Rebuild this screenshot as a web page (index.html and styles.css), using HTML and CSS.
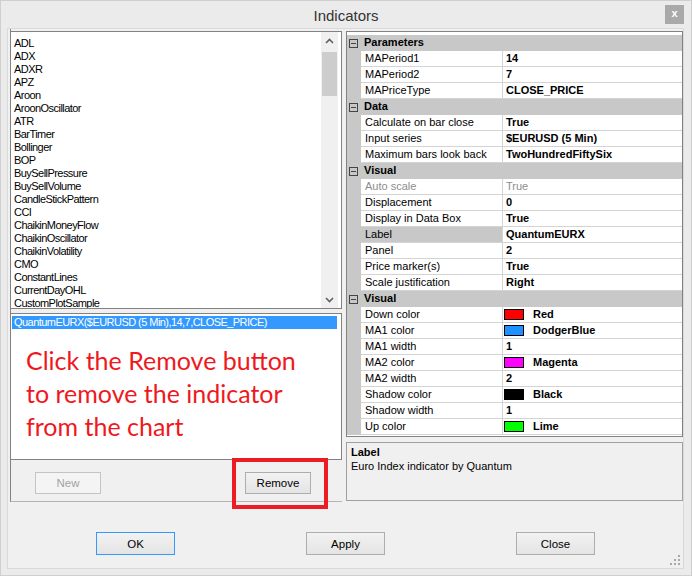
FILE: index.html
```html
<!DOCTYPE html>
<html lang="en">
<head>
    <meta charset="UTF-8">
    <title>Indicators</title>
    <link rel="stylesheet" href="styles.css">
</head>
<body>
<div class="window">
    <div class="titlebar">
        <span></span>
        <span class="title">Indicators</span>
        <span class="close">x</span>
    </div>
    <div class="client">
        <div class="panes">
            <!-- left side: available + applied indicators -->
            <div class="left">
                <div class="list available">
                    <ul class="items">
                        <li>ADL</li>
                        <li>ADX</li>
                        <li>ADXR</li>
                        <li>APZ</li>
                        <li>Aroon</li>
                        <li>AroonOscillator</li>
                        <li>ATR</li>
                        <li>BarTimer</li>
                        <li>Bollinger</li>
                        <li>BOP</li>
                        <li>BuySellPressure</li>
                        <li>BuySellVolume</li>
                        <li>CandleStickPattern</li>
                        <li>CCI</li>
                        <li>ChaikinMoneyFlow</li>
                        <li>ChaikinOscillator</li>
                        <li>ChaikinVolatility</li>
                        <li>CMO</li>
                        <li>ConstantLines</li>
                        <li>CurrentDayOHL</li>
                        <li>CustomPlotSample</li>
                    </ul>
                    <div class="scrollbar">
                        <div class="arrow">
                            <svg width="9" height="6" viewBox="0 0 9 6"><path d="M1 5 L4.5 1.5 L8 5" fill="none" stroke="#606060" stroke-width="1.6"/></svg>
                        </div>
                        <div class="thumb"></div>
                        <div class="track"></div>
                        <div class="arrow">
                            <svg width="9" height="6" viewBox="0 0 9 6"><path d="M1 1 L4.5 4.5 L8 1" fill="none" stroke="#606060" stroke-width="1.6"/></svg>
                        </div>
                    </div>
                </div>
                <div class="list applied">
                    <div class="selected">QuantumEURX($EURUSD (5 Min),14,7,CLOSE_PRICE)</div>
                    <div class="note">Click the Remove button<br>to remove the indicator<br>from the chart</div>
                </div>
                <div class="left-buttons">
                    <button class="btn small disabled">New</button>
                    <div class="marked">
                        <button class="btn small">Remove</button>
                        <div class="redbox"></div>
                    </div>
                </div>
            </div>

            <!-- right side: property grid -->
            <div class="right">
                <div class="grid">
                    <div class="row cat"><span class="margin"><i class="minus"></i></span><span class="catname">Parameters</span></div>
                    <div class="row"><span class="margin"></span><span class="name">MAPeriod1</span><span class="val">14</span></div>
                    <div class="row"><span class="margin"></span><span class="name">MAPeriod2</span><span class="val">7</span></div>
                    <div class="row"><span class="margin"></span><span class="name">MAPriceType</span><span class="val">CLOSE_PRICE</span></div>
                    <div class="row cat"><span class="margin"><i class="minus"></i></span><span class="catname">Data</span></div>
                    <div class="row"><span class="margin"></span><span class="name">Calculate on bar close</span><span class="val">True</span></div>
                    <div class="row"><span class="margin"></span><span class="name">Input series</span><span class="val">$EURUSD (5 Min)</span></div>
                    <div class="row"><span class="margin"></span><span class="name">Maximum bars look back</span><span class="val">TwoHundredFiftySix</span></div>
                    <div class="row cat"><span class="margin"><i class="minus"></i></span><span class="catname">Visual</span></div>
                    <div class="row readonly"><span class="margin"></span><span class="name">Auto scale</span><span class="val">True</span></div>
                    <div class="row"><span class="margin"></span><span class="name">Displacement</span><span class="val">0</span></div>
                    <div class="row"><span class="margin"></span><span class="name">Display in Data Box</span><span class="val">True</span></div>
                    <div class="row current"><span class="margin"></span><span class="name">Label</span><span class="val">QuantumEURX</span></div>
                    <div class="row"><span class="margin"></span><span class="name">Panel</span><span class="val">2</span></div>
                    <div class="row"><span class="margin"></span><span class="name">Price marker(s)</span><span class="val">True</span></div>
                    <div class="row"><span class="margin"></span><span class="name">Scale justification</span><span class="val">Right</span></div>
                    <div class="row cat"><span class="margin"><i class="minus"></i></span><span class="catname">Visual</span></div>
                    <div class="row"><span class="margin"></span><span class="name">Down color</span><span class="val"><i class="swatch red"></i>Red</span></div>
                    <div class="row"><span class="margin"></span><span class="name">MA1 color</span><span class="val"><i class="swatch blue"></i>DodgerBlue</span></div>
                    <div class="row"><span class="margin"></span><span class="name">MA1 width</span><span class="val">1</span></div>
                    <div class="row"><span class="margin"></span><span class="name">MA2 color</span><span class="val"><i class="swatch magenta"></i>Magenta</span></div>
                    <div class="row"><span class="margin"></span><span class="name">MA2 width</span><span class="val">2</span></div>
                    <div class="row"><span class="margin"></span><span class="name">Shadow color</span><span class="val"><i class="swatch black"></i>Black</span></div>
                    <div class="row"><span class="margin"></span><span class="name">Shadow width</span><span class="val">1</span></div>
                    <div class="row"><span class="margin"></span><span class="name">Up color</span><span class="val"><i class="swatch lime"></i>Lime</span></div>
                </div>
                <div class="help">
                    <div class="help-title">Label</div>
                    <div class="help-text">Euro Index indicator by Quantum</div>
                </div>
            </div>
        </div>

        <div class="footer">
            <button class="btn wide default">OK</button>
            <button class="btn wide">Apply</button>
            <button class="btn wide">Close</button>
            <svg class="grip" width="10" height="10" viewBox="0 0 10 10">
                <rect x="8" y="0" width="2" height="2" fill="#a8a8a8"/>
                <rect x="4" y="4" width="2" height="2" fill="#a8a8a8"/>
                <rect x="8" y="4" width="2" height="2" fill="#a8a8a8"/>
                <rect x="0" y="8" width="2" height="2" fill="#a8a8a8"/>
                <rect x="4" y="8" width="2" height="2" fill="#a8a8a8"/>
                <rect x="8" y="8" width="2" height="2" fill="#a8a8a8"/>
            </svg>
        </div>
    </div>
</div>
</body>
</html>
```

FILE: styles.css
```css
*{
    box-sizing: border-box;
}
body{
    margin: 0;
    background: #ebebeb;
    font-family: "Liberation Sans", Arial, sans-serif;
    font-size: 11px;
    color: #000;
}
.window{
    width: 692px;
    height: 576px;
    border: 1px solid #cfcfcf;
    background: #ebebeb;
}
.titlebar{
    height: 27px;
    display: grid;
    grid-template-columns: 1fr auto 1fr;
    align-items: center;
}
.title{
    font-size: 15px;
    color: #333;
    padding-top: 1px;
}
.close{
    justify-self: end;
    width: 19px;
    height: 19px;
    margin-right: 7px;
    background: #a9a9a9;
    color: #fff;
    font-size: 11px;
    font-weight: bold;
    line-height: 17px;
    text-align: center;
}
.client{
    margin-left: 6px;
    width: 677px;
    height: 541px;
    border: 1px solid #d9d9d9;
    background: #f0f0f0;
}
.panes{
    display: flex;
    height: 473px;
}

/* left pane */
.left{
    margin-left: 2px;
    width: 332px;
    padding-top: 2px;
    border-left: 1px solid #828282;
    border-bottom: 1px solid #b4b4b4;
}
.list{
    background: #fff;
    border: 1px solid #828282;
    border-left: 0;
    letter-spacing: -0.55px;
}
.available{
    height: 278px;
    display: flex;
}
.items{
    list-style: none;
    margin: 0;
    padding: 5px 0 0 3px;
    flex: 1;
    line-height: 13px;
    overflow: hidden;
}
.scrollbar{
    width: 17px;
    margin-right: 3px;
    background: #f0f0f0;
    display: flex;
    flex-direction: column;
}
.scrollbar .arrow{
    height: 17px;
    display: flex;
    align-items: center;
    justify-content: center;
}
.scrollbar .thumb{
    height: 44px;
    margin: 3px 1px 0;
    background: #cdcdcd;
}
.scrollbar .track{
    flex: 1;
}
.applied{
    height: 147px;
    margin-top: 4px;
    padding-top: 2px;
}
.selected{
    margin: 0 4px 0 1px;
    height: 13px;
    line-height: 13px;
    padding-left: 2px;
    background: #3399ff;
    color: #fff;
}
.note{
    margin-top: 15px;
    padding-left: 15px;
    font-family: Lato, "Open Sans", sans-serif;
    font-size: 25px;
    line-height: 33px;
    letter-spacing: 0;
    color: #f01820;
}
.left-buttons{
    display: flex;
    padding: 12px 0 0 24px;
    gap: 144px;
}
.marked{
    position: relative;
}
.redbox{
    position: absolute;
    left: -13px;
    top: -14px;
    width: 96px;
    height: 51px;
    border: 4px solid #ed1c24;
}

/* buttons */
.btn{
    font-family: "Liberation Sans", Arial, sans-serif;
    font-size: 11.5px;
    color: #000;
    border: 1px solid #adadad;
    background: linear-gradient(#f2f2f2, #e4e4e4);
    padding: 0;
}
.btn.small{
    width: 66px;
    height: 22px;
}
.btn.wide{
    width: 79px;
    height: 23px;
}
.btn.disabled{
    color: #a3a3a3;
    border-color: #c4c4c4;
    background: #f4f4f4;
}
.btn.default{
    border-color: #3399ff;
}

/* property grid */
.right{
    margin-left: 4px;
    width: 337px;
    padding-top: 2px;
}
.grid{
    height: 406px;
    border: 1px solid #828282;
    padding-top: 3px;
    background: #fff;
}
.row{
    display: grid;
    grid-template-columns: 14px 142px 1fr;
    height: 16px;
    line-height: 15px;
}
.margin{
    background: #c8c8c8;
}
.name{
    padding-left: 4px;
    border-right: 1px solid #d4d4d4;
    border-bottom: 1px solid #d4d4d4;
    white-space: nowrap;
    overflow: hidden;
}
.val{
    padding-left: 3px;
    font-weight: bold;
    border-bottom: 1px solid #d4d4d4;
    display: flex;
    align-items: center;
    white-space: nowrap;
}
.row.cat{
    grid-template-columns: 14px 1fr;
    background: #c8c8c8;
}
.catname{
    padding-left: 3px;
    font-weight: bold;
}
.minus{
    display: block;
    width: 9px;
    height: 9px;
    margin: 4px 0 0 2px;
    border: 1px solid #444;
    background: linear-gradient(#444, #444) center / 5px 1px no-repeat;
}
.row.readonly .name,
.row.readonly .val{
    color: #8d8d8d;
    font-weight: normal;
}
.row.current .name{
    background: #c8c8c8;
}
.swatch{
    width: 20px;
    height: 11px;
    margin: 0 9px 0 -2px;
    border: 1px solid #000;
}
.swatch.red{ background: #ff0000; }
.swatch.blue{ background: #1e90ff; }
.swatch.magenta{ background: #ff00ff; }
.swatch.black{ background: #000; }
.swatch.lime{ background: #00ff00; }

.help{
    height: 59px;
    margin-top: 5px;
    border: 1px solid #a0a0a0;
    padding: 2px 0 0 4px;
    line-height: 14px;
}
.help-title{
    font-weight: bold;
}

/* bottom buttons */
.footer{
    position: relative;
    height: 66px;
    padding-top: 30px;
    display: flex;
    justify-content: center;
    gap: 131px;
}
.grip{
    position: absolute;
    right: 3px;
    bottom: 3px;
}
```
